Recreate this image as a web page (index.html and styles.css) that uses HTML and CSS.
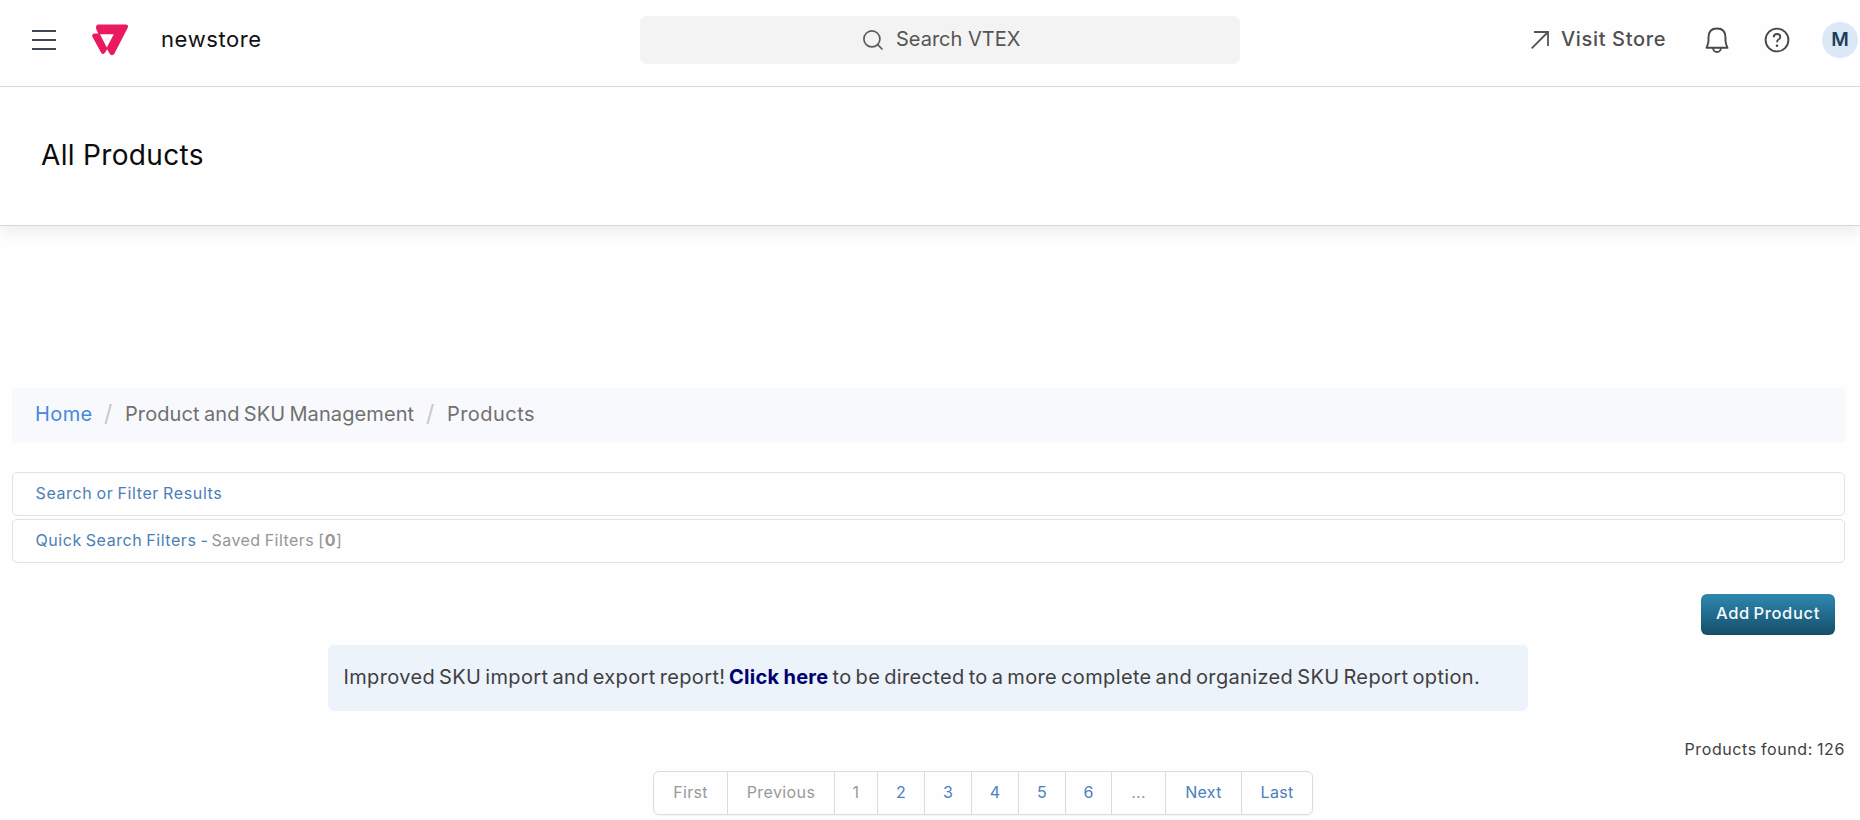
FILE: index.html
```html
<!DOCTYPE html>
<html lang="en">
<head>
<meta charset="utf-8">
<title>All Products</title>
<link rel="stylesheet" href="styles.css">
</head>
<body>
<header class="topbar">
  <div class="brand">
    <svg class="menu-icon" width="24" height="20" viewBox="0 0 24 20" stroke="#3f4756" stroke-width="2"><path d="M0 1H24M0 10H24M0 19H24"/></svg>
    <svg class="logo" width="36" height="32" viewBox="0 0 36 32"><path fill="#e91a5f" fill-rule="evenodd" d="M6 .5H34Q37 .8 35.600 4L22.500 29.500Q20 33 17.500 29.500L15.200 25.200L12.700 29Q11 31.200 9.300 29L.4 12.800Q-.6 9.800 2.500 9.500H6.200L4.200 5Q3.300 1.500 6 .5ZM8 10.200L14.800 23.500L21.800 10.200Z"/></svg>
    <span class="store">newstore</span>
  </div>
  <div class="search">
    <svg width="20" height="20" viewBox="0 0 20 20" fill="none" stroke="#5b5b5b" stroke-width="1.700" stroke-linecap="round"><circle cx="8.900" cy="8.900" r="8"/><path d="M14.700 14.700L19 19"/></svg>
    <span class="search-label">Search VTEX</span>
  </div>
  <div class="actions">
    <svg class="arrow" width="18" height="18" viewBox="0 0 18 18" fill="none" stroke="#545454" stroke-width="1.800"><path d="M3 1H17V15M17 1L.7 17.300"/></svg>
    <span class="visit">Visit Store</span>
    <svg class="bell" width="24" height="26" viewBox="0 0 24 26" fill="none" stroke="#484848" stroke-width="1.900" stroke-linejoin="round"><path d="M3.500 10.500Q3.500 1.500 12 1.500T20.500 10.500V14Q20.700 17 22.500 20.800H1.500Q3.300 17 3.500 14ZM8 21Q8.500 25 12 25T16 21"/></svg>
    <svg class="help" width="26" height="26" viewBox="0 0 26 26" fill="none" stroke="#484848" stroke-width="1.900"><circle cx="13" cy="13" r="11.400"/><path d="M9.700 10.200Q9.800 7 13 7T16.300 10Q16.300 11.500 14.600 12.500Q13 13.400 13 15.200"/><circle cx="13" cy="18.700" r="1.300" fill="#484848" stroke="none"/></svg>
    <span class="avatar">M</span>
  </div>
</header>
<section class="title-bar"><h1 class="title">All Products</h1></section>
<main class="content">
  <nav class="breadcrumb"><a class="home">Home</a><span class="slash">/</span><span class="crumb">Product and SKU Management</span><span class="slash">/</span><span class="last">Products</span></nav>
  <div class="panel"><span class="t-search">Search or Filter Results</span></div>
  <div class="panel"><span class="t-quick">Quick Search Filters -</span><span class="saved">Saved Filters [<b>0</b>]</span></div>
  <div class="button-row"><button class="add">Add Product</button></div>
  <div class="notice"><span class="n1">Improved SKU import and export report!</span><a class="n2">Click here</a><span class="n3">to be directed to a more complete and organized SKU Report option.</span></div>
  <div class="found"><span>Products found: 126</span></div>
  <ul class="pages">
    <li class="off w-first">First</li><li class="off w-prev">Previous</li><li class="off w-one">1</li><li class="w-num">2</li><li class="w-num">3</li><li class="w-num">4</li><li class="w-num">5</li><li class="w-six">6</li><li class="off w-dots">...</li><li class="w-next">Next</li><li class="w-last">Last</li>
  </ul>
</main>
</body>
</html>
```
FILE: styles.css
```css
* { box-sizing: border-box; }
body { margin: 0; height: 820px; overflow: hidden; background: #fefefe; font-family: Inter, "Liberation Sans", sans-serif; color: #3f3f3f; white-space: nowrap; }
svg { display: block; flex: none; }
.topbar { height: 87px; border-bottom: 1px solid #d9d9d9; display: grid; grid-template-columns: 640px 600px 620px; align-items: start; }
.brand { height: 80px; display: flex; align-items: center; padding-left: 32px; }
.logo { margin-left: 36px; }
.store { margin: -2px 0 0 33px; font-size: 22px; letter-spacing: .6px; color: #111; }
.search { margin-top: 16px; height: 48px; border-radius: 6px; background: #f3f3f3; display: flex; align-items: center; padding-left: 223px; font-size: 20px; color: #555; }
.search-label { margin: -2px 0 0 13px; }
.actions { height: 80px; display: flex; align-items: center; padding-left: 291px; }
.visit { width: 105px; margin: -2px 0 0 12px; font-size: 20px; font-weight: 500; letter-spacing: .65px; color: #505050; }
.bell { margin-left: 39px; }
.help { margin-left: 35px; }
.avatar { margin-left: 32px; width: 36px; height: 36px; flex: none; border-radius: 50%; background: #dbe9f6; color: #1d3d5c; font-size: 19px; font-weight: 600; line-height: 35px; text-align: center; }
.title-bar { height: 139px; padding: 50px 0 0 41px; border-bottom: 1px solid #d6d6d6; box-shadow: 0 8px 12px rgba(0,0,0,.06); }
.title { margin: 0; font-size: 28px; line-height: 36px; font-weight: 400; letter-spacing: .33px; color: #0b0b0b; }
.content { padding: 162px 15px 0 12px; }
.breadcrumb { height: 54px; margin-bottom: 30px; padding: 0 0 2px 23px; background: #f8f9fc; display: flex; align-items: center; font-size: 20px; color: #707070; }
.home { color: #4389dc; width: 69px; letter-spacing: .4px; }
.slash { color: #c8c8c8; width: 21px; font-size: 23px; }
.crumb { width: 301px; letter-spacing: .1px; word-spacing: -1.5px; }
.last { letter-spacing: .45px; }
.panel { height: 44px; margin-bottom: 3px; border: 1px solid #e2e2e2; border-radius: 5px; padding: 0 0 2px 22.5px; display: flex; align-items: center; font-size: 16px; color: #4a80b5; }
.t-search { letter-spacing: .62px; word-spacing: -1px; }
.t-quick { width: 176px; letter-spacing: .55px; word-spacing: -1px; }
.saved { color: #969696; letter-spacing: .45px; word-spacing: -.8px; }
.button-row { display: flex; justify-content: flex-end; padding: 28px 10px 0 0; }
.add { width: 134px; height: 41px; border: 0; border-radius: 6px; padding: 0 0 3px; background: linear-gradient(#2f88b0, #154e6a); color: #f4fafd; font: 500 16.5px Inter, sans-serif; letter-spacing: .65px; word-spacing: -1.5px; }
.notice { margin: 10px 0 0 316px; width: 1200px; height: 66px; padding: 0 0 2px 15.5px; border-radius: 6px; background: #ecf3fa; display: flex; align-items: center; font-size: 20px; letter-spacing: .36px; word-spacing: -2px; }
.n1 { width: 385.5px; }
.n2 { width: 103.5px; font-weight: 700; color: #00006e; word-spacing: -1px; letter-spacing: .28px; }
.found { height: 60px; padding-top: 26px; display: flex; justify-content: flex-end; font-size: 16px; line-height: 24px; letter-spacing: .6px; word-spacing: -1px; }
.pages { list-style: none; margin: 0 0 0 641px; padding: 0; width: 660px; height: 44px; border: 1px solid #dcdcdc; border-radius: 6px; display: flex; font-size: 16px; line-height: 41px; letter-spacing: .3px; text-align: center; color: #4a80bd; box-shadow: 0 1px 2px rgba(0,0,0,.05); }
.pages li + li { border-left: 1px solid #dcdcdc; }
.off { color: #999; }
.w-first { width: 73px; }
.w-prev { width: 107px; letter-spacing: .4px; }
.w-one { width: 43px; }
.w-num { width: 47px; }
.w-six { width: 46px; }
.w-dots { width: 54px; }
.w-next { width: 76px; }
.w-last { width: 71px; }
```
